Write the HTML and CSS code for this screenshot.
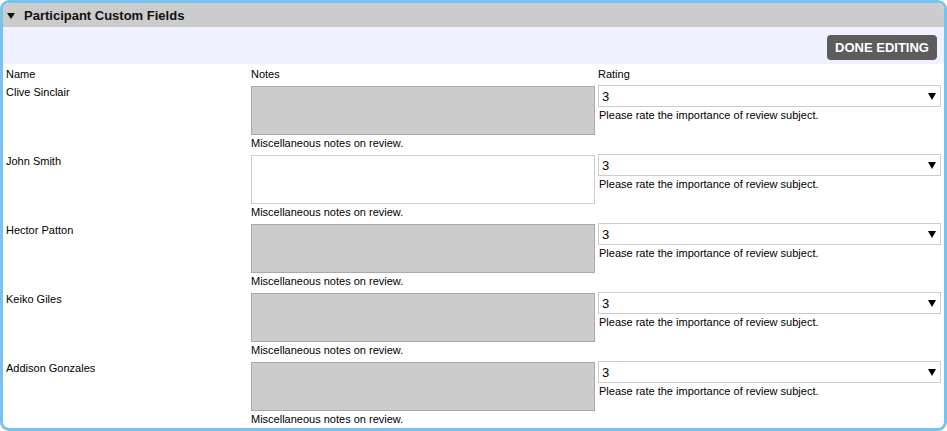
FILE: index.html
```html
<!DOCTYPE html>
<html>
<head>
<meta charset="utf-8">
<link rel="stylesheet" href="styles.css">
</head>
<body>
<div class="panel">
  <div class="panel-head"><span class="caret"></span><span class="title">Participant Custom Fields</span></div>
  <div class="toolbar"><button class="done">DONE EDITING</button></div>
  <div class="grid">
    <div class="row head-row">
      <div class="c-name">Name</div>
      <div class="c-notes">Notes</div>
      <div class="c-rating">Rating</div>
    </div>
    <div class="row">
      <div class="c-name">Clive Sinclair</div>
      <div class="c-notes"><div class="notes disabled"></div><div class="help">Miscellaneous notes on review.</div></div>
      <div class="c-rating"><div class="select"><span>3</span><span class="arrow"></span></div><div class="help">Please rate the importance of review subject.</div></div>
    </div>
    <div class="row">
      <div class="c-name">John Smith</div>
      <div class="c-notes"><div class="notes"></div><div class="help">Miscellaneous notes on review.</div></div>
      <div class="c-rating"><div class="select"><span>3</span><span class="arrow"></span></div><div class="help">Please rate the importance of review subject.</div></div>
    </div>
    <div class="row">
      <div class="c-name">Hector Patton</div>
      <div class="c-notes"><div class="notes disabled"></div><div class="help">Miscellaneous notes on review.</div></div>
      <div class="c-rating"><div class="select"><span>3</span><span class="arrow"></span></div><div class="help">Please rate the importance of review subject.</div></div>
    </div>
    <div class="row">
      <div class="c-name">Keiko Giles</div>
      <div class="c-notes"><div class="notes disabled"></div><div class="help">Miscellaneous notes on review.</div></div>
      <div class="c-rating"><div class="select"><span>3</span><span class="arrow"></span></div><div class="help">Please rate the importance of review subject.</div></div>
    </div>
    <div class="row">
      <div class="c-name">Addison Gonzales</div>
      <div class="c-notes"><div class="notes disabled"></div><div class="help">Miscellaneous notes on review.</div></div>
      <div class="c-rating"><div class="select"><span>3</span><span class="arrow"></span></div><div class="help">Please rate the importance of review subject.</div></div>
    </div>
  </div>
</div>
</body>
</html>
```
FILE: styles.css
```css
html, body {
  margin: 0;
  padding: 0;
  background: #ffffff;
}
body {
  font-family: "Liberation Sans", Arial, sans-serif;
  font-size: 11px;
  color: #000000;
}
.panel {
  box-sizing: border-box;
  width: 947px;
  height: 431px;
  border: 3px solid #75c3ee;
  border-radius: 9px;
  overflow: hidden;
  background: #ffffff;
}
.panel-head {
  height: 24px;
  background: #cccccc;
  display: flex;
  align-items: center;
  padding-left: 4px;
  border-top-left-radius: 6px;
  border-top-right-radius: 6px;
}
.caret {
  width: 0;
  height: 0;
  border-left: 4px solid transparent;
  border-right: 4px solid transparent;
  border-top: 6px solid #111111;
  margin-right: 9px;
  margin-top: 1px;
}
.title {
  font-size: 13px;
  font-weight: bold;
  color: #111111;
}
.toolbar {
  height: 37px;
  background: #eff2fe;
  display: flex;
  justify-content: flex-end;
  align-items: flex-start;
  padding-right: 7px;
  box-sizing: border-box;
  padding-top: 8px;
}
.done {
  width: 110px;
  height: 25px;
  border: none;
  border-radius: 4px;
  background: #5c5c5c;
  color: #ffffff;
  font-family: "Liberation Sans", Arial, sans-serif;
  font-size: 13px;
  font-weight: bold;
  padding: 0;
  line-height: 25px;
}
.row {
  display: grid;
  grid-template-columns: 245px 350px 346px;
  padding-bottom: 5px;
  line-height: 13px;
}
.head-row {
  padding-top: 4px;
  padding-bottom: 5px;
}
.c-name {
  padding-left: 3px;
}
.c-notes {
  padding-left: 3px;
}
.notes {
  box-sizing: border-box;
  width: 344px;
  height: 49px;
  border: 1px solid #cccccc;
  background: #ffffff;
  margin-bottom: 2px;
}
.notes.disabled {
  background: #cccccc;
  border-color: #a9a9a9;
}
.select {
  box-sizing: border-box;
  width: 343px;
  height: 22px;
  border: 1px solid #cccccc;
  background: #ffffff;
  display: flex;
  align-items: center;
  justify-content: space-between;
  padding-left: 3px;
  padding-right: 4px;
  font-size: 13px;
  margin-top: -1px;
  margin-bottom: 2px;
}
.arrow {
  width: 0;
  height: 0;
  border-left: 4px solid transparent;
  border-right: 4px solid transparent;
  border-top: 7px solid #000000;
}
.help {
  line-height: 13px;
}
.c-rating .help {
  padding-left: 1px;
}
```
